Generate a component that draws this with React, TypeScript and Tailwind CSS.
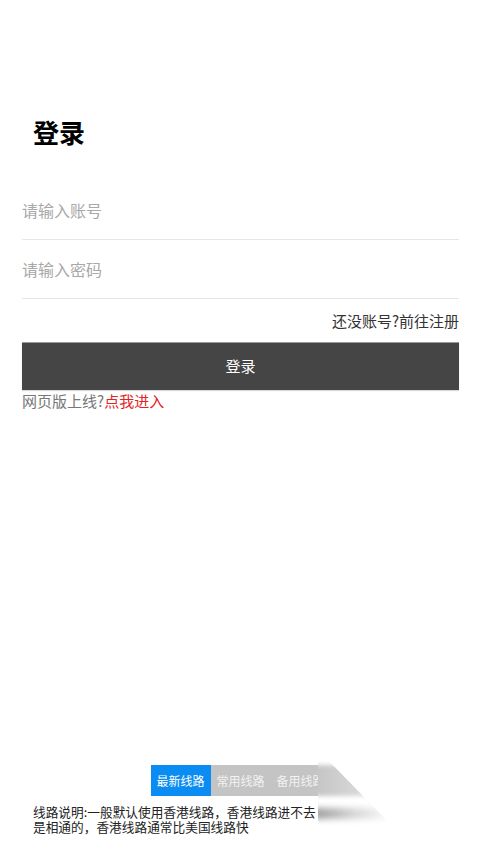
import React from "react";

export default function App() {
  return (
    <div className="relative h-[855px] w-full overflow-hidden bg-white font-['Noto_Sans_CJK_SC',sans-serif] flex flex-col">
      <div className="px-[22px]">
        <h1 className="mt-[119px] pl-[11px] text-[26px] leading-[26px] font-bold text-black">登录</h1>
        <div className="mt-[36px]">
          <div className="h-[59px] border-b border-[#e6e6e6] flex items-center">
            <span className="text-[16px] leading-[20px] text-[#a8a8a8]">请输入账号</span>
          </div>
          <div className="h-[59px] border-b border-[#e6e6e6] flex items-center">
            <span className="text-[16px] leading-[20px] text-[#a8a8a8]">请输入密码</span>
          </div>
        </div>
        <div className="mt-[11px] text-right text-[15px] leading-[22px] text-[#333]">还没账号?前往注册</div>
        <button className="mt-[10px] w-full h-[48px] bg-[#454545] text-white text-[15px] flex items-center justify-center border-t border-[#9a9a9a] shadow-[0_1px_1px_rgba(0,0,0,0.15)]">
          登录
        </button>
        <div className="mt-[1px] text-[15px] leading-[20px] text-[#777]">
          网页版上线?<span className="text-[#e02424]">点我进入</span>
        </div>
      </div>

      <div className="mt-auto pb-[21px]">
        <div className="flex justify-center">
          <div className="flex h-[31px] text-[12px] text-white">
            <div className="w-[60px] bg-[#0a8cf2] flex items-center justify-center">最新线路</div>
            <div className="w-[60px] bg-[#c4c4c4] flex items-center justify-center text-[#f2f2f2]">常用线路</div>
            <div className="w-[60px] bg-[#c4c4c4] flex items-center justify-center text-[#f2f2f2]">备用线路</div>
          </div>
        </div>
        <div className="mt-[9px] px-[33px] text-[12.7px] leading-[14.5px] text-[#222]">
          <div className="whitespace-nowrap">线路说明:一般默认使用香港线路，香港线路进不去</div>
          <div>是相通的，香港线路通常比美国线路快</div>
        </div>
      </div>

      <div className="absolute left-[318px] top-[758px] w-[163px] h-[72px] bg-white">
        <div className="absolute left-0 top-0 w-[90px] h-[78px] [clip-path:polygon(0_0,8px_0,84px_78px,0_78px)]">
          <div className="absolute left-[-4px] top-[7px] w-[90px] h-[31px] bg-gradient-to-r from-[#c4c4c4] via-[#d8d8d8] to-transparent blur-[2px]"></div>
          <div className="absolute left-[-4px] top-[50px] w-[80px] h-[11px] bg-gradient-to-r from-[#9a9a9a] via-[#d6d6d6] to-transparent blur-[3px]"></div>
        </div>
      </div>
    </div>
  );
}
